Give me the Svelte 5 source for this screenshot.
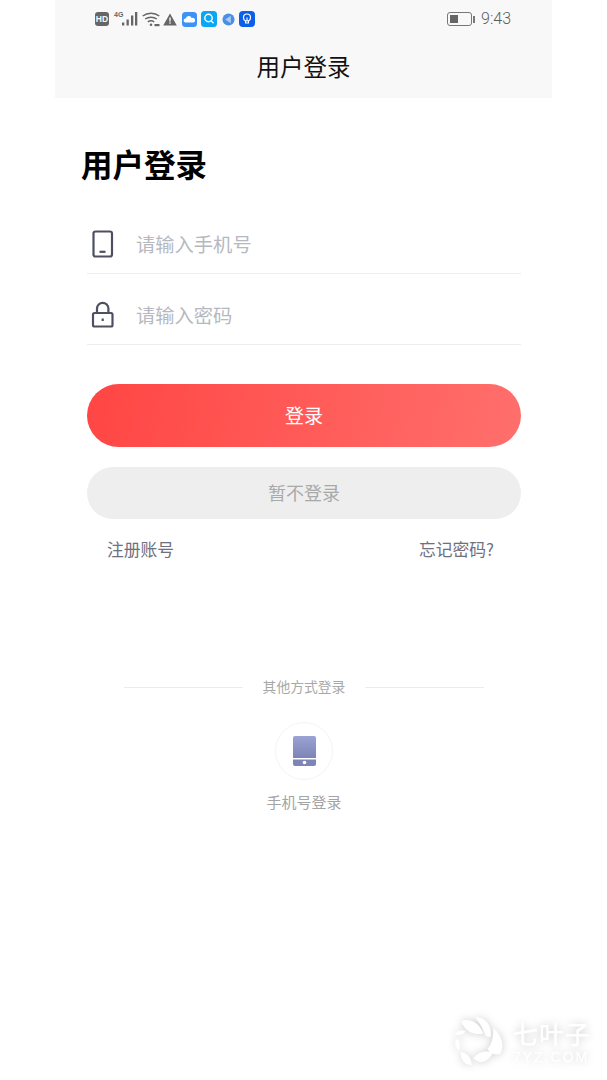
<script>
  let phone = $state('');
  let password = $state('');
</script>

<div class="page">
  <header class="top">
    <div class="status">
      <div class="status-left">
        <span class="hd">HD</span>
        <svg class="signal" width="26" height="16" viewBox="0 0 26 16">
          <text x="2" y="6" class="tiny">4G</text>
          <rect x="10" y="11.500" width="2.300" height="3" fill="#666" />
          <rect x="14.500" y="8.500" width="2.300" height="6" fill="#666" />
          <rect x="19" y="4.500" width="2.300" height="10" fill="#666" />
          <rect x="23" y="1" width="2.300" height="13.500" fill="#666" />
        </svg>
        <svg class="wifi" width="18" height="15" viewBox="0 0 18 15" fill="none" stroke="#666" stroke-width="1.500">
          <path d="M.7 4 C5.500 .2 12.500 .2 17.300 4" />
          <path d="M3.200 7 C6.500 4.500 11.500 4.500 14.800 7" />
          <path d="M5.800 9.800 C7.500 8.600 10.500 8.600 12.200 9.800" />
          <circle cx="9" cy="12.800" r="1.300" fill="#666" stroke="none" />
          <rect x="12.500" y="12" width="5" height="2.200" fill="#666" stroke="none" />
        </svg>
        <svg class="warn" width="14" height="13" viewBox="0 0 14 13">
          <path d="M7 .5 L13.800 12.500 H.2 Z" fill="#666" />
          <rect x="6.300" y="4.500" width="1.400" height="4" fill="#f8f8f8" />
          <rect x="6.300" y="9.300" width="1.400" height="1.400" fill="#f8f8f8" />
        </svg>
        <svg class="cloud" width="15" height="15" viewBox="0 0 15 15">
          <rect width="15" height="15" rx="3.500" fill="#3d92f5" />
          <path d="M3.500 10.500 a2 2 0 0 1 .2-4 a3.200 3.200 0 0 1 6-.6 a2.400 2.400 0 0 1 1.800 4.600 Z" fill="#fff" />
        </svg>
        <svg class="search" width="16" height="16" viewBox="0 0 16 16" fill="none">
          <rect width="16" height="16" rx="3.500" fill="#0aa5f5" />
          <circle cx="7.500" cy="7" r="3.700" stroke="#fff" stroke-width="1.400" />
          <path d="M10.200 9.800 L12.500 12.300" stroke="#fff" stroke-width="1.400" />
        </svg>
        <svg class="globe" width="13" height="13" viewBox="0 0 14 14">
          <circle cx="7" cy="7" r="6.500" fill="#4b8fe2" />
          <path d="M9.500 3 V11 L3.500 7 Z" fill="#a9ccf5" />
        </svg>
        <svg class="bulb" width="16" height="16" viewBox="0 0 16 16" fill="none">
          <rect width="16" height="16" rx="4" fill="#0b5fe8" />
          <circle cx="8" cy="6.500" r="3.500" stroke="#fff" stroke-width="1.200" />
          <path d="M6.500 10 V12 H9.500 V10 M8 6.500 V10" stroke="#fff" stroke-width="1.100" />
        </svg>
      </div>
      <div class="status-right">
        <span class="battery"><span class="level"></span></span>
        <span class="cap"></span>
        <span class="time">9:43</span>
      </div>
    </div>
    <div class="nav-title">用户登录</div>
  </header>

  <main class="content">
    <h1>用户登录</h1>

    <div class="fields">
      <label class="field">
        <svg width="30" height="30" viewBox="0 0 30 30" fill="none" stroke="#4e5061" stroke-width="2.200">
          <rect x="6.500" y="2.500" width="18.500" height="25" rx="2" />
          <path d="M12.500 22.800 H18.500" />
        </svg>
        <input type="text" placeholder="请输入手机号" bind:value={phone} />
      </label>
      <label class="field">
        <svg width="30" height="30" viewBox="0 0 30 30" fill="none" stroke="#4e5061" stroke-width="2.200">
          <rect x="6" y="13" width="19.500" height="13.500" rx="1.500" />
          <path d="M10 13 V8.500 a5.700 5.700 0 0 1 11.400 0 V13" />
          <path d="M15.700 18.500 V21" />
        </svg>
        <input type="password" placeholder="请输入密码" bind:value={password} />
      </label>
    </div>

    <button class="btn primary">登录</button>
    <button class="btn ghost">暂不登录</button>

    <div class="links">
      <span>注册账号</span>
      <span>忘记密码?</span>
    </div>

    <div class="other">
      <span class="line"></span>
      <span class="other-text">其他方式登录</span>
      <span class="line"></span>
    </div>

    <div class="method">
      <div class="circle">
        <svg width="23" height="30" viewBox="0 0 23 30">
          <defs>
            <linearGradient id="ph" x1="0" y1="0" x2="0" y2="1">
              <stop offset="0" stop-color="#9aa3d2" />
              <stop offset="1" stop-color="#7d84b8" />
            </linearGradient>
          </defs>
          <path d="M2 0 H21 a2 2 0 0 1 2 2 V22 H0 V2 a2 2 0 0 1 2-2 Z" fill="url(#ph)" />
          <path d="M0 23.500 H23 V28 a2 2 0 0 1-2 2 H2 a2 2 0 0 1-2-2 Z" fill="#7d84b8" />
          <circle cx="11.500" cy="26.500" r="1.800" fill="#fff" />
        </svg>
      </div>
      <span class="method-text">手机号登录</span>
    </div>
  </main>

  <div class="watermark">
    <svg width="48" height="48" viewBox="0 0 145 145" fill="#fff">
      <path d="M20 12 C40 4 72 14 86 50 C62 56 28 46 20 12 Z" />
      <path d="M62 2 C84 -2 112 18 108 60 C98 62 92 58 88 46 C82 30 72 14 62 2 Z" />
      <path d="M116 34 C138 50 152 84 136 112 C118 116 104 108 98 96 C112 84 116 60 116 34 Z" />
      <path d="M56 124 C70 104 96 100 114 108 C102 132 78 148 56 124 Z" />
      <path d="M18 106 C34 108 50 122 50 145 C30 146 16 130 18 106 Z" />
      <path d="M4 66 C14 70 18 84 12 100 C2 94 -2 78 4 66 Z" />
      <path d="M0 52 C6 42 20 38 32 42 C26 52 12 58 0 52 Z" />
    </svg>
    <div class="mark-text">
      <span class="mark-cn">七叶子</span>
      <span class="mark-en">7YZ.COM</span>
    </div>
  </div>
</div>

<style>
  :global(body) {
    margin: 0;
    background: #fff;
  }

  .page {
    position: relative;
    width: 607px;
    height: 1080px;
    overflow: hidden;
    background: #fff;
    font-family: "Noto Sans CJK SC", "Noto Sans", sans-serif;
  }

  .top {
    width: 497px;
    height: 98px;
    margin: 0 auto;
    background: #f8f8f8;
  }

  .status {
    display: flex;
    justify-content: space-between;
    align-items: center;
    height: 38px;
    padding: 0 41px 0 40px;
  }
  .status-left { display: flex; align-items: center; }
  .status-right { display: flex; align-items: center; }

  .hd {
    width: 14px;
    height: 14px;
    border-radius: 3px;
    background: #666;
    color: #f8f8f8;
    font: bold 8.500px/14px "Liberation Sans", sans-serif;
    text-align: center;
  }
  .tiny { font: bold 7px "Liberation Sans", sans-serif; fill: #666; }
  .signal { margin-left: 3px; }
  .wifi { margin-left: 4px; }
  .warn { margin-left: 3px; }
  .cloud { margin-left: 5px; }
  .search { margin-left: 4px; }
  .globe { margin-left: 5px; }
  .bulb { margin-left: 4px; }

  .battery {
    box-sizing: border-box;
    width: 25px;
    height: 14px;
    padding: 2px;
    border: 1.500px solid #777;
    border-radius: 3px;
  }
  .level { display: block; width: 8px; height: 100%; background: #666; }
  .cap { width: 2px; height: 7px; margin: 0 6px 0 1px; background: #777; }
  .time {
    color: #5c5c5c;
    font: 300 16px/20px Roboto, sans-serif;
  }

  .nav-title {
    height: 60px;
    color: #111;
    font-size: 23.500px;
    line-height: 60px;
    margin-top: -2px;
    text-align: center;
  }

  .content {
    box-sizing: border-box;
    width: 497px;
    margin: 0 auto;
    padding: 0 31px 0 32px;
  }

  h1 {
    margin: 45px 0 0 -6px;
    color: #000;
    font-size: 31.500px;
    font-weight: 700;
    line-height: 40px;
  }

  .fields { margin-top: 20px; }

  .field {
    box-sizing: border-box;
    display: flex;
    align-items: center;
    gap: 20px;
    height: 71px;
    padding-top: 12px;
    border-bottom: 1px solid #eceef0;
  }
  .field svg { flex: none; }

  input {
    flex: 1;
    min-width: 0;
    padding: 0;
    margin-left: -1px;
    border: none;
    outline: none;
    background: transparent;
    font: inherit;
    font-size: 19.300px;
  }
  input::placeholder { color: #b6b8c0; opacity: 1; }

  .btn {
    display: block;
    width: 100%;
    padding: 0 0 2px;
    border: none;
    font-family: inherit;
  }
  .primary {
    height: 63px;
    margin-top: 39px;
    border-radius: 32px;
    background: linear-gradient(100deg, #ff4644, #ff6f6c);
    color: #fff;
    font-size: 19px;
  }
  .ghost {
    height: 52px;
    margin-top: 20px;
    border-radius: 26px;
    background: #eeeeee;
    color: #a9a9a9;
    font-size: 18px;
  }

  .links {
    display: flex;
    justify-content: space-between;
    margin-top: 18px;
    padding: 0 27px 0 20px;
    color: #6e7080;
    font-size: 16.800px;
    line-height: 24px;
  }

  .other {
    display: flex;
    justify-content: center;
    align-items: center;
    gap: 20px;
    height: 20px;
    margin-top: 116px;
    color: #a8a8a8;
    font-size: 13.800px;
    line-height: 20px;
  }
  .other-text { margin-top: -2px; }
  .line { width: 119px; height: 1px; background: #ececec; }

  .method {
    display: flex;
    flex-direction: column;
    align-items: center;
    margin-top: 25px;
  }
  .circle {
    box-sizing: border-box;
    display: flex;
    justify-content: center;
    align-items: center;
    width: 58px;
    height: 58px;
    border: 1px solid #f4f4f6;
    border-radius: 50%;
  }
  .method-text {
    margin-top: 11px;
    color: #a4a4a4;
    font-size: 15px;
    line-height: 22px;
  }

  /* watermark sits over the page corner */
  .watermark {
    position: absolute;
    left: 455px;
    top: 1017px;
    display: flex;
    align-items: flex-start;
    gap: 10px;
    filter: drop-shadow(0 0 4px rgba(0, 0, 0, 0.2));
    color: #fff;
  }
  .mark-text { display: flex; flex-direction: column; align-items: flex-start; }
  .mark-cn {
    margin-top: 3px;
    font-size: 25px;
    font-weight: 500;
    line-height: 26px;
    letter-spacing: 1px;
  }
  .mark-en {
    margin-top: 3px;
    font: 14px/16px "Liberation Sans", sans-serif;
    letter-spacing: 2px;
  }
</style>
